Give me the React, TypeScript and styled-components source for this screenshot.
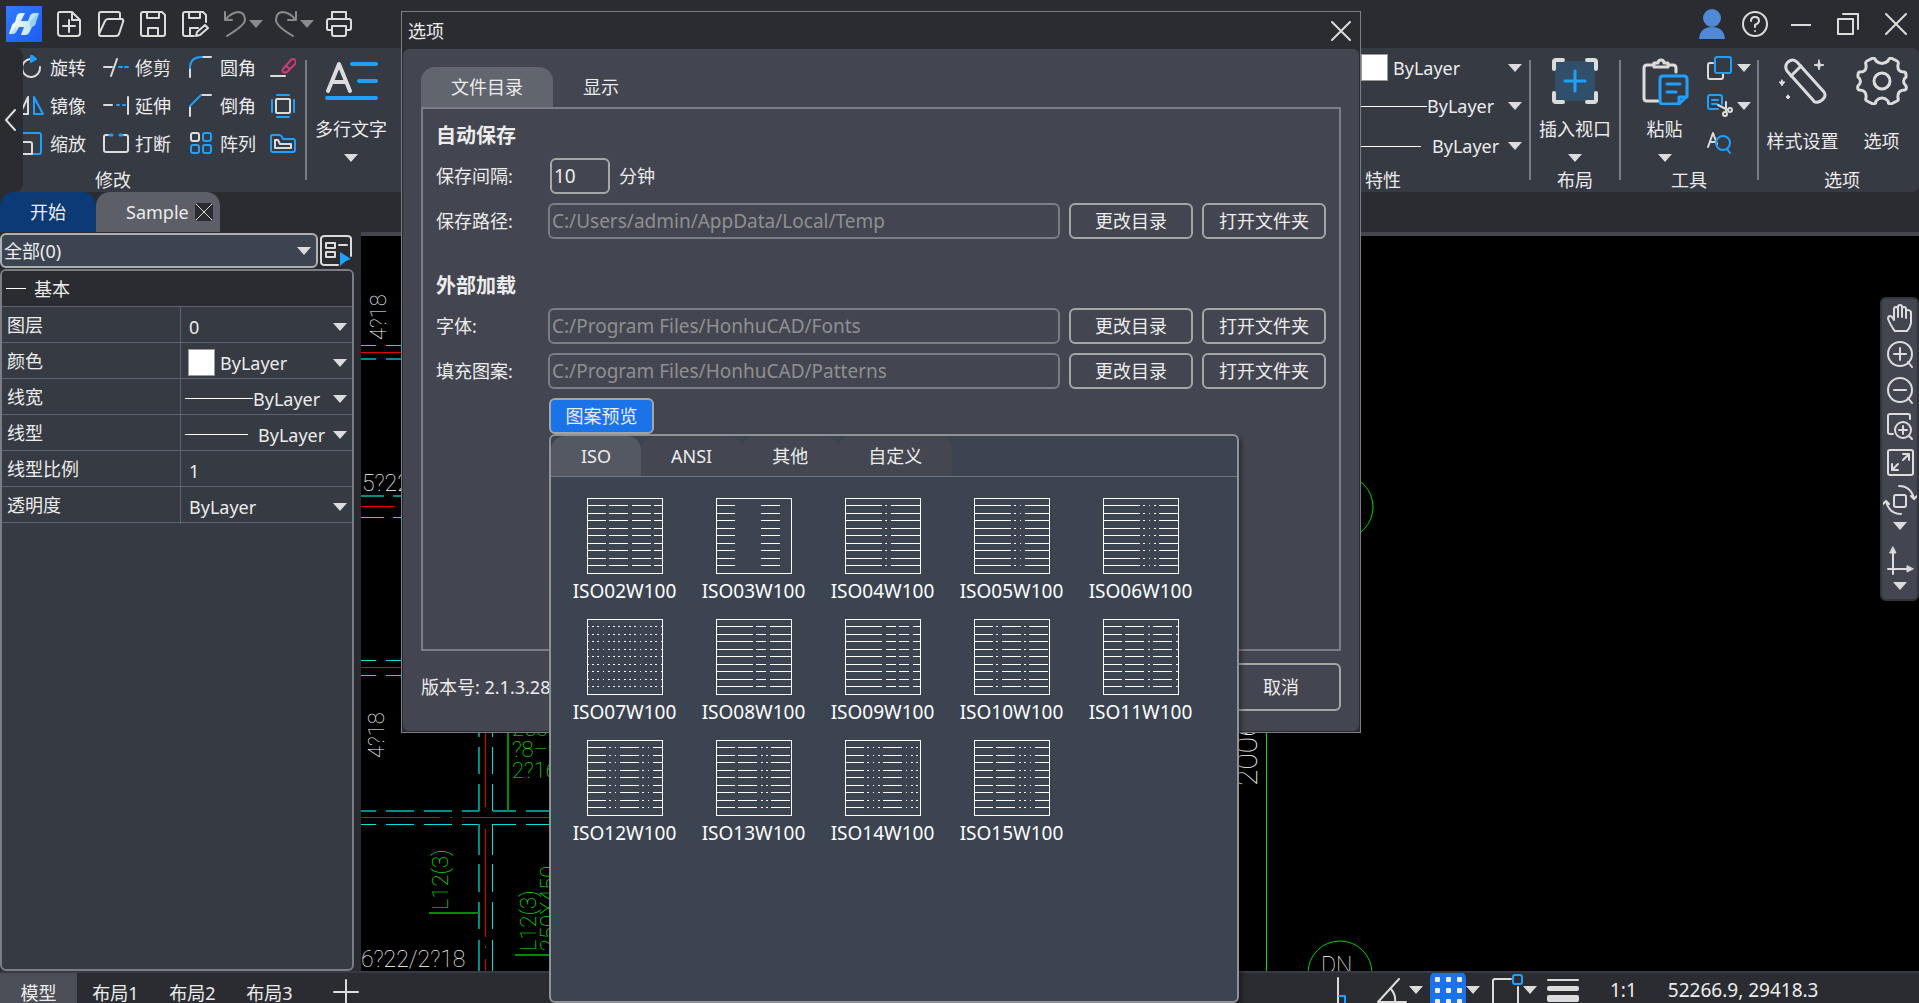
import React from "react";
import styled, { createGlobalStyle } from "styled-components";

const c = {
  chrome: "#2b2c31",
  ribbon: "#363a43",
  dialog: "#434650",
  field: "#3c4452",
  edge: "#7b7d84",
  edgeLight: "#a5a6a6",
  text: "#ececec",
  icon: "#dcdcdc",
  blue: "#1ea0ff",
  accent: "#1a73e8",
};

const Global = createGlobalStyle`
  * { box-sizing: border-box; }
  body {
    margin: 0;
    background: ${c.chrome};
    overflow: hidden;
  }
  body, button, input, select {
    font-family: "Noto Sans", "Noto Sans CJK SC", sans-serif;
    font-size: 18px;
    line-height: 24px;
    color: ${c.text};
  }
  button, input, select { margin: 0; padding: 0; border: 0; background: none; outline: none; }
  button { white-space: nowrap; }
  svg { display: block; flex: none; }
`;

/* ---------- shell ---------- */

const Shell = styled.div`
  position: relative;
  height: 100vh;
  display: flex;
  flex-direction: column;
  overflow: hidden;
  background: ${c.chrome};
`;

const TitleBar = styled.header`
  flex: none;
  height: 48px;
  display: flex;
  align-items: center;
  padding: 0 12px 0 6px;
`;

const QuickTools = styled.div`
  display: flex;
  align-items: center;
  gap: 14px;
  margin-left: 13px;
`;

const IconButton = styled.button`
  display: flex;
  align-items: center;
  justify-content: center;
  gap: 2px;
`;

const SplitButton = styled(IconButton)`
  margin-right: -3px;
`;

const WindowTools = styled.div`
  margin-left: auto;
  display: flex;
  align-items: center;
  gap: 16px;
`;

const WindowButtons = styled.div`
  display: flex;
  align-items: center;
  gap: 26px;
  margin-left: 6px;
`;

/* ---------- ribbon ---------- */

const Ribbon = styled.div`
  flex: none;
  height: 144px;
  display: flex;
  background: ${c.ribbon};
  border-radius: 0 6px 6px 0;
  overflow: hidden;
`;

const ScrollButton = styled.button`
  flex: none;
  width: 23px;
  z-index: 1;
  display: flex;
  align-items: center;
  justify-content: center;
  padding-right: 3px;
  background: ${c.chrome};
  border-radius: 0 8px 8px 0;
`;

const Group = styled.section<{ $w: number; $tuck?: number; $bleed?: number }>`
  flex: none;
  width: ${(p) => p.$w}px;
  margin-left: ${(p) => -(p.$tuck ?? 0)}px;
  margin-right: ${(p) => -(p.$bleed ?? 0)}px;
  display: flex;
  flex-direction: column;
`;

const GroupBody = styled.div<{ $end?: boolean; $pad?: number }>`
  flex: 1;
  display: flex;
  justify-content: ${(p) => (p.$end ? "flex-end" : "center")};
  padding-top: 1px;
  padding-left: ${(p) => p.$pad ?? 0}px;
`;

const GroupLabel = styled.div`
  height: 24px;
  text-align: center;
`;

const Divider = styled.div`
  flex: none;
  width: 2px;
  margin: 12px -1px;
  background: ${c.edge};
`;

const Spacer = styled.div`
  flex: 1;
`;

const ToolGrid = styled.div`
  display: grid;
  grid-template-columns: 85px 85px 82px 36px;
  grid-auto-rows: 38px;
`;

const Tool = styled.button`
  display: flex;
  align-items: center;
  gap: 6px;
`;

const BigTool = styled.button<{ $low?: boolean }>`
  display: flex;
  flex-direction: column;
  align-items: center;
  align-self: flex-start;
  padding-top: 8px;

  & > span { margin-top: ${(p) => (p.$low ? 24 : 12)}px; }
  & > span + svg { margin-top: 13px; }
`;

const PropColumn = styled.div`
  width: 170px;
  display: grid;
  grid-template-rows: 37px 40px 40px;
  padding-right: 8px;
`;

const SmallTools = styled.div`
  display: grid;
  grid-auto-rows: 38px;
  margin-left: 18px;
`;

const SmallTool = styled.button`
  display: flex;
  align-items: center;
  gap: 4px;
`;

const StyleTools = styled.div`
  display: flex;
  gap: 17px;
  padding-right: 10px;
`;

/* ---------- value pickers ---------- */

const Picker = styled.div`
  display: flex;
  align-items: center;
  min-width: 0;
`;

const PlainSelect = styled.select`
  flex: 1;
  min-width: 0;
  height: 28px;
  appearance: none;
`;

const Swatch = styled.span`
  flex: none;
  width: 27px;
  height: 27px;
  background: #fff;
  border: 1px solid #9a9a9a;
`;

const LineSample = styled.span<{ $w: number }>`
  flex: none;
  width: ${(p) => p.$w}px;
  height: 1px;
  background: #fff;
`;

/* ---------- document tabs ---------- */

const DocTabs = styled.nav`
  flex: none;
  height: 40px;
  display: flex;
`;

const DocTab = styled.div<{ $active?: boolean }>`
  display: flex;
  align-items: center;
  gap: 6px;
  width: ${(p) => (p.$active ? 96 : 124)}px;
  padding-left: 30px;
  border-radius: 14px 14px 0 0;
  background: ${(p) => (p.$active ? "#0c3a76" : "#5c5f67")};
`;

const DocClose = styled.button`
  width: 18px;
  height: 18px;
  border-radius: 3px;
  background: ${c.chrome};
`;

/* ---------- workspace ---------- */

const Workspace = styled.main`
  flex: 1;
  min-height: 0;
  display: flex;
`;

const Side = styled.aside`
  flex: none;
  width: 361px;
  padding: 1px 7px 0 0;
  display: flex;
  flex-direction: column;
`;

const FilterRow = styled.div`
  display: flex;
  gap: 2px;
`;

const FilterBox = styled(Picker)`
  width: 318px;
  height: 35px;
  padding: 0 5px 0 2px;
  background: ${c.field};
  border: 2px solid #b0b0b0;
  border-radius: 6px;
`;

const PropPanel = styled.div`
  flex: 1;
  margin-top: 1px;
  border: 2px solid ${c.edge};
  border-radius: 6px;
  background: ${c.ribbon};
  overflow: hidden;
`;

const PropHeader = styled.button`
  display: flex;
  align-items: center;
  gap: 8px;
  width: 100%;
  height: 36px;
  padding-left: 4px;
  background: ${c.chrome};
  border-bottom: 1px solid #5d6373;
`;

const PropRow = styled.div`
  display: grid;
  grid-template-columns: 179px 1fr;
  height: 36px;
  border-bottom: 1px solid #5d6373;

  & > label {
    padding-left: 5px;
    line-height: 37px;
    border-right: 1px solid #5d6373;
  }
`;

const PropValue = styled(Picker)<{ $start: number }>`
  padding: 2px 5px 0 ${(p) => p.$start}px;
`;

const PlainInput = styled.input`
  width: 100%;
  height: 28px;
`;

const Canvas = styled.div`
  position: relative;
  flex: 1;
  min-width: 0;
  border-top: 4px solid #44474f;
  background: #000;
  overflow: hidden;
`;

const Drawing = styled.svg`
  width: 100%;
  height: 100%;
`;

const CadText = styled.text<{ $size?: number }>`
  font-family: Roboto, "Open Sans", sans-serif;
  font-weight: 100;
  font-size: ${(p) => p.$size ?? 22}px;
`;

const ViewBar = styled.div`
  position: absolute;
  top: 61px;
  right: 0;
  width: 39px;
  height: 304px;
  padding: 5px 0;
  display: flex;
  flex-direction: column;
  align-items: center;
  gap: 8px;
  border: 2px solid #33353c;
  border-radius: 6px;
  background: ${c.dialog};
`;

const ViewTool = styled(IconButton)`
  flex-direction: column;
  gap: 6px;
`;

/* ---------- status bar ---------- */

const StatusBar = styled.footer`
  flex: none;
  height: 32px;
  overflow: hidden;
  border-top: 2px solid #363a43;
`;

const StatusInner = styled.div`
  height: 38px;
  display: flex;
  align-items: center;
`;

const LayoutTab = styled.button<{ $active?: boolean }>`
  width: 77px;
  height: 38px;
  padding-top: 1px;
  background: ${(p) => (p.$active ? "#4b4e56" : "transparent")};
`;

const AddLayout = styled(IconButton)`
  margin-left: 25px;
`;

const StatusTools = styled.div`
  margin-left: auto;
  display: flex;
  align-items: center;
  width: 583px;
  padding-bottom: 4px;
`;

const Toggle = styled.button<{ $after?: number; $tight?: boolean }>`
  display: flex;
  align-items: center;
  margin-right: ${(p) => p.$after ?? 0}px;
  gap: ${(p) => (p.$tight ? 0 : 2)}px;
`;

const GridChip = styled.span`
  width: 36px;
  height: 36px;
  border-radius: 6px;
  background: ${c.accent};
`;

const Readout = styled.span`
  margin-left: 31px;
  font-size: 19px;
`;

/* ---------- options dialog ---------- */

const Dialog = styled.div`
  position: absolute;
  top: 11px;
  left: 401px;
  width: 960px;
  border: 1px solid ${c.edge};
  background: ${c.chrome};
`;

const DialogTitle = styled.div`
  height: 37px;
  display: flex;
  align-items: center;
  justify-content: space-between;
  padding: 0 9px 0 6px;
`;

const DialogBody = styled.div`
  margin: 0 1px 1px;
  padding: 18px 18px 20px;
  border-radius: 6px;
  background: ${c.dialog};
`;

const DialogTabs = styled.div`
  display: flex;
  height: 40px;
`;

const DialogTab = styled.button<{ $active?: boolean }>`
  width: ${(p) => (p.$active ? 132 : 96)}px;
  border-radius: 14px 14px 0 0;
  background: ${(p) => (p.$active ? "#61656d" : "transparent")};
`;

const Pane = styled.div`
  height: 544px;
  padding: 12px 13px;
  border: 2px solid ${c.edge};
`;

const Heading = styled.h2<{ $mt?: number }>`
  margin: ${(p) => p.$mt ?? 0}px 0 0;
  font-size: 20px;
  line-height: 30px;
  font-weight: 700;
`;

const FormRow = styled.div<{ $mt: number }>`
  display: grid;
  grid-template-columns: 112px 1fr;
  align-items: center;
  min-height: 36px;
  margin-top: ${(p) => p.$mt}px;
`;

const Inline = styled.div<{ $indent?: number }>`
  display: flex;
  align-items: center;
  gap: 9px;
  padding-left: ${(p) => p.$indent ?? 0}px;
`;

const TextBox = styled.input<{ $w?: number }>`
  height: 36px;
  padding: 0 2px;
  font-size: 19px;
  ${(p) => (p.$w ? `width: ${p.$w}px;` : "flex: 1; min-width: 0;")}
  border: 2px solid ${c.edgeLight};
  border-radius: 6px;

  &:disabled {
    color: #8f9091;
    border-color: ${c.edge};
  }
`;

const Button = styled.button<{ $w: number; $tall?: boolean; $primary?: boolean }>`
  width: ${(p) => p.$w}px;
  height: ${(p) => (p.$tall ? 48 : 36)}px;
  border: 2px solid ${c.edgeLight};
  border-radius: 6px;
  background: ${(p) => (p.$primary ? c.accent : "transparent")};
`;

const DialogFooter = styled.div`
  display: flex;
  align-items: center;
  justify-content: space-between;
  margin-top: 12px;
`;

/* ---------- pattern popup ---------- */

const Anchor = styled.div`
  position: relative;
`;

const Popup = styled.div`
  position: absolute;
  top: 36px;
  left: 0;
  width: 690px;
  height: 569px;
  border: 2px solid #919295;
  border-radius: 6px;
  background: ${c.field};
  box-shadow: 3px 3px 4px rgba(0, 0, 0, 0.35);
  overflow: hidden;
`;

const PopupTabs = styled.div`
  display: flex;
  height: 41px;
  border-bottom: 1px solid #71757e;
`;

const PopupTab = styled.button<{ $active?: boolean }>`
  padding: 0 30px;
  border-radius: 14px 14px 0 0;
  background: ${(p) => (p.$active ? "#545863" : "#444751")};
`;

const PatternGrid = styled.div`
  display: grid;
  grid-template-columns: repeat(5, 129px);
  grid-auto-rows: 121px;
  padding: 21px 9px;
`;

const Pattern = styled.figure`
  margin: 0;
  display: flex;
  flex-direction: column;
  align-items: center;
  gap: 5px;
  font-size: 19px;
  color: #fff;
`;

/* ---------- icons ---------- */

type IconProps = { w: number; h: number; sw?: number; children: React.ReactNode };

const Icon = ({ w, h, sw = 2, children }: IconProps) => (
  <svg
    width={w}
    height={h}
    viewBox={`0 0 ${w} ${h}`}
    fill="none"
    stroke={c.icon}
    strokeWidth={sw}
    strokeLinecap="round"
    strokeLinejoin="round"
    aria-hidden="true"
  >
    {children}
  </svg>
);

const Caret = ({ dim }: { dim?: boolean }) => (
  <svg width="14" height="8" viewBox="0 0 14 8" aria-hidden="true">
    <path d="M0 0H14L7 8Z" fill={dim ? "#8a8b8e" : c.icon} />
  </svg>
);

const Cross = ({ size, sw = 2 }: { size: number; sw?: number }) => (
  <Icon w={size} h={size} sw={sw}>
    <path d={`M1 1L${size - 1} ${size - 1}M${size - 1} 1L1 ${size - 1}`} />
  </Icon>
);

const Logo = () => (
  <svg width="36" height="36" viewBox="0 0 36 36" aria-hidden="true">
    <defs>
      <linearGradient id="lg" x1="0" y1="0" x2="1" y2="1">
        <stop offset="0" stopColor="#2f7bff" />
        <stop offset="1" stopColor="#1f5cf0" />
      </linearGradient>
      <linearGradient id="lh" x1="0" y1="0" x2="1" y2="0">
        <stop offset="0" stopColor="#fff" />
        <stop offset="1" stopColor="#a9dcfb" />
      </linearGradient>
    </defs>
    <rect width="36" height="36" fill="url(#lg)" />
    <path d="M11 9Q12 7 15 7H19L15 15H22L24 10Q25 7 29 7H33L29 19Q28 20 26 21L23 27Q22 29 19 29H15L18 21H13L10 26Q9 28 6 28H3L6 19Q7 17 9 16Z" fill="url(#lh)" />
    <path d="M24 15L32 8L29 19L24 22Z" fill="#7cc6f7" opacity=".6" />
    <path d="M4 27L11 20L10 26Q9 28 6 28Z" fill="#8fd0fa" opacity=".6" />
  </svg>
);

const patterns: [string, number[][]][] = [
  ["ISO02W100", [[1, 19], [22, 41], [45, 64], [67, 75]]],
  ["ISO03W100", [[1, 19], [45, 64]]],
  ["ISO04W100", [[1, 37], [40, 42], [46, 75]]],
  ["ISO05W100", [[1, 37], [40, 42], [46, 47], [51, 75]]],
  ["ISO06W100", [[1, 37], [40, 42], [46, 47], [51, 53], [56, 75]]],
  ["ISO07W100", [[1, 2], [5, 7], [10, 12], [16, 17], [21, 23], [26, 28], [31, 33], [37, 39], [42, 44], [47, 49], [53, 54], [58, 60], [63, 65], [68, 70], [74, 75]]],
  ["ISO08W100", [[1, 37], [40, 50], [54, 75]]],
  ["ISO09W100", [[1, 37], [41, 51], [54, 64], [68, 75]]],
  ["ISO10W100", [[1, 19], [22, 24], [28, 47], [50, 52], [55, 74]]],
  ["ISO11W100", [[1, 19], [22, 41], [45, 47], [50, 69], [73, 75]]],
  ["ISO12W100", [[1, 19], [22, 24], [28, 29], [33, 52], [55, 57], [61, 62], [66, 75]]],
  ["ISO13W100", [[1, 19], [22, 41], [45, 47], [50, 52], [55, 74]]],
  ["ISO14W100", [[1, 19], [22, 24], [28, 29], [33, 35], [38, 57], [61, 62], [66, 68], [71, 73]]],
  ["ISO15W100", [[1, 19], [22, 41], [45, 47], [50, 52], [56, 57], [61, 75]]],
];

const hatchRows = [7, 15, 22, 30, 37, 45, 52, 60, 67];

const Hatch = ({ dashes }: { dashes: number[][] }) => (
  <svg width="76" height="76" viewBox="0 0 76 76" fill="none" stroke="#fff" shapeRendering="crispEdges" aria-hidden="true">
    <rect x="0.5" y="0.5" width="75" height="75" />
    <path d={hatchRows.map((y) => dashes.map(([a, b]) => `M${a} ${y + 0.5}H${b}`).join("")).join("")} />
  </svg>
);

/* ---------- ribbon tools ---------- */

const modifyTools: { label?: string; name: string; icon: React.ReactNode }[] = [
  {
    label: "旋转",
    name: "旋转",
    icon: (
      <>
        <path d="M22 12A9 9 0 1 1 12 4" />
        <path d="M13 0L18 4L13 7Z" fill={c.blue} stroke={c.blue} />
      </>
    ),
  },
  {
    label: "修剪",
    name: "修剪",
    icon: (
      <>
        <path d="M1 12H9M14 4L8 21" />
        <path d="M16 12H19M22 12H25" stroke={c.blue} />
      </>
    ),
  },
  {
    label: "圆角",
    name: "圆角",
    icon: (
      <>
        <path d="M2 22V13M14 2H23" />
        <path d="M2 13Q2 2 14 2" stroke={c.blue} />
      </>
    ),
  },
  {
    name: "删除",
    icon: (
      <g>
        <path d="M1 21H15" />
        <g stroke="#d23a74">
          <path d="M13 14L21 5Q23 3 25 5Q27 7 25 9L17 17Q15 18 13 17Q12 15 13 14Z" />
          <path d="M16 11L20 14" />
        </g>
      </g>
    ),
  },
  {
    label: "镜像",
    name: "镜像",
    icon: (
      <>
        <path d="M10 4V21H2Z" />
        <path d="M16 4V21H25Z" stroke={c.blue} />
      </>
    ),
  },
  {
    label: "延伸",
    name: "延伸",
    icon: (
      <>
        <path d="M1 12H9M25 4V21" />
        <path d="M14 12H16M20 12H22" stroke={c.blue} />
      </>
    ),
  },
  {
    label: "倒角",
    name: "倒角",
    icon: (
      <>
        <path d="M2 23V14M14 2H23" />
        <path d="M2 13L13 2" stroke={c.blue} />
      </>
    ),
  },
  {
    name: "分解",
    icon: (
      <>
        <rect x="6" y="6" width="14" height="14" rx="1" />
        <path d="M7 2H19M7 24H19M2 7V19M24 7V19" stroke={c.blue} />
      </>
    ),
  },
  {
    label: "缩放",
    name: "缩放",
    icon: (
      <>
        <path d="M2 2H21Q23 2 23 4V21Q23 23 21 23H2" stroke={c.blue} />
        <path d="M2 11H12Q14 11 14 13V23H2" />
      </>
    ),
  },
  {
    label: "打断",
    name: "打断",
    icon: (
      <>
        <path d="M5 4H3Q1 4 1 6V19Q1 21 3 21H23Q25 21 25 19V6Q25 4 23 4H21" />
        <path d="M7 4H9M17 4H19" stroke={c.blue} strokeWidth="3" />
      </>
    ),
  },
  {
    label: "阵列",
    name: "阵列",
    icon: (
      <>
        <rect x="3" y="2" width="8" height="8" rx="2" />
        <g stroke={c.blue}>
          <rect x="15" y="2" width="8" height="8" rx="2" />
          <rect x="3" y="14" width="8" height="8" rx="2" />
          <rect x="15" y="14" width="8" height="8" rx="2" />
        </g>
      </>
    ),
  },
  {
    name: "偏移",
    icon: (
      <>
        <path d="M2 4H9Q11 4 12 6L13 8H23Q25 8 25 10V19Q25 21 23 21H3Q1 21 1 19V5Q1 4 2 4Z" stroke={c.blue} />
        <path d="M5 9H8L10 13H21V17H5Z" />
      </>
    ),
  },
];

const LayerPicker = ({ name, start }: { name: string; start: React.ReactNode }) => (
  <Picker>
    {start}
    <PlainSelect aria-label={name} defaultValue="ByLayer">
      <option>ByLayer</option>
    </PlainSelect>
    <Caret />
  </Picker>
);

const Gap = styled.span<{ $w: number }>`
  flex: none;
  width: ${(p) => p.$w}px;
`;

const RibbonView = () => (
  <Ribbon>
    <ScrollButton aria-label="向左滚动">
      <Icon w={12} h={24}>
        <path d="M11 2L2 12L11 22" />
      </Icon>
    </ScrollButton>
    <Group $w={386} $tuck={103}>
      <GroupBody $end>
        <ToolGrid>
          {modifyTools.map((t) => (
            <Tool key={t.name} aria-label={t.name}>
              <Icon w={26} h={26}>{t.icon}</Icon>
              {t.label}
            </Tool>
          ))}
        </ToolGrid>
      </GroupBody>
      <GroupLabel>修改</GroupLabel>
    </Group>
    <Divider />
    <Group $w={90}>
      <GroupBody>
        <BigTool>
          <Icon w={54} h={48} sw={4}>
            <path d="M4 34L15 7L26 34M8 25H22" />
            <path d="M28 7H52M35 24H52M3 41H52" stroke={c.blue} />
          </Icon>
          <span>多行文字</span>
          <Caret />
        </BigTool>
      </GroupBody>
    </Group>
    <Spacer />
    <Group $w={294}>
      <GroupBody $end>
        <PropColumn>
          <LayerPicker name="颜色" start={<><Gap $w={1} /><Swatch /><Gap $w={5} /></>} />
          <LayerPicker name="线宽" start={<LineSample $w={67} />} />
          <LayerPicker name="线型" start={<><LineSample $w={61} /><Gap $w={11} /></>} />
        </PropColumn>
      </GroupBody>
      <GroupLabel>特性</GroupLabel>
    </Group>
    <Divider />
    <Group $w={90}>
      <GroupBody>
        <BigTool>
          <Icon w={48} h={48} sw={4}>
            <rect x="4" y="4" width="40" height="40" fill="#2f4f6b" stroke="none" />
            <path d="M3 12V5Q3 3 5 3H12M36 3H43Q45 3 45 5V12M45 36V43Q45 45 43 45H36M12 45H5Q3 45 3 43V36" />
            <path d="M24 14V34M14 24H34" stroke={c.blue} strokeWidth="3" />
          </Icon>
          <span>插入视口</span>
          <Caret />
        </BigTool>
      </GroupBody>
      <GroupLabel>布局</GroupLabel>
    </Group>
    <Divider />
    <Group $w={138}>
      <GroupBody $pad={13}>
        <BigTool>
          <Icon w={48} h={48} sw={3}>
            <path d="M12 8H6Q3 8 3 11V41Q3 44 6 44H17M28 8H32Q35 8 35 11V15" />
            <path d="M13 10V6H17Q17 3 20 3Q23 3 23 6H27V10Z" />
            <path d="M22 19H43Q46 19 46 22V39L38 47H22Q19 47 19 44V22Q19 19 22 19Z" stroke={c.blue} />
            <path d="M26 27H39M26 35H35M38 47V40H46" stroke={c.blue} />
          </Icon>
          <span>粘贴</span>
          <Caret />
        </BigTool>
        <SmallTools>
          <SmallTool aria-label="复制">
            <Icon w={26} h={26}>
              <path d="M6 8H3Q1 8 1 10V22Q1 24 3 24H14Q16 24 16 22V19" />
              <rect x="8" y="2" width="16" height="16" rx="2" stroke={c.blue} />
            </Icon>
            <Caret />
          </SmallTool>
          <SmallTool aria-label="剪切">
            <Icon w={26} h={26}>
              <path d="M15 11V4Q15 2 13 2H3Q1 2 1 4V14Q1 16 3 16H11M5 7H11M5 11H10" stroke={c.blue} />
              <path d="M11 12L21 17M19 9V18" />
              <circle cx="18" cy="21" r="2" />
              <circle cx="23" cy="17" r="2" />
            </Icon>
            <Caret />
          </SmallTool>
          <SmallTool aria-label="查找">
            <Icon w={26} h={26}>
              <path d="M1 16L6 2L10 13M3 11H8" />
              <circle cx="16" cy="12" r="7" stroke={c.blue} />
              <path d="M20 18L23 22" stroke={c.blue} />
            </Icon>
          </SmallTool>
        </SmallTools>
      </GroupBody>
      <GroupLabel>工具</GroupLabel>
    </Group>
    <Divider />
    <Group $w={168} $bleed={7}>
      <GroupBody>
        <StyleTools>
          <BigTool $low>
            <Icon w={50} h={48} sw={3}>
              <path d="M9 14Q6 9 10 5Q15 1 19 5L46 35Q48 38 46 41Q42 46 37 45Q36 45 35 43Z" />
              <path d="M13 19L23 9" />
              <path d="M41 3L42 7L46 8L42 9L41 13L40 9L36 8L40 7ZM4 23L5 25L7 25L5 27L4 29L3 27L1 25L3 25ZM10 38L11 39L12 40L11 41L10 42L9 41L8 40L9 39Z" fill={c.icon} strokeWidth="1" />
            </Icon>
            <span>样式设置</span>
          </BigTool>
          <BigTool $low>
            <Icon w={52} h={48} sw={3}>
              <path d="M17 1L11 4Q9 5 10 8Q11 15 4 15Q2 15 2 18V20Q7 24 2 29Q1 32 3 33Q11 33 10 41Q9 43 11 44L17 47Q20 47 20 44Q26 38 32 44Q32 47 35 47L41 44Q43 43 42 41Q41 33 49 33Q51 32 50 29Q45 24 50 20V18Q50 15 48 15Q41 15 42 8Q43 5 41 4L35 1Q33 1 32 4Q26 9 20 4Q19 1 17 1Z" />
              <circle cx="26" cy="24" r="8" />
            </Icon>
            <span>选项</span>
          </BigTool>
        </StyleTools>
      </GroupBody>
      <GroupLabel>选项</GroupLabel>
    </Group>
  </Ribbon>
);

/* ---------- title bar ---------- */

const TitleBarView = () => (
  <TitleBar>
    <Logo />
    <QuickTools>
      <IconButton aria-label="新建">
        <Icon w={28} h={28}>
          <path d="M5 2H17L25 10V23Q25 26 22 26H6Q3 26 3 23V4Q3 2 5 2ZM17 2V10H25M14 10V22M8 16H20" />
        </Icon>
      </IconButton>
      <IconButton aria-label="打开">
        <Icon w={28} h={28}>
          <path d="M2 24V4Q2 2 4 2H21Q23 2 23 4V9M2 24L8 11Q9 9 11 9H25Q27 10 26 12L22 24Q21 26 19 26H4Q2 26 2 24" />
        </Icon>
      </IconButton>
      <IconButton aria-label="保存">
        <Icon w={28} h={28}>
          <path d="M4 2H23L26 5V24Q26 26 24 26H4Q2 26 2 24V4Q2 2 4 2ZM8 2V8H20V2M9 26V18H19V26" />
        </Icon>
      </IconButton>
      <IconButton aria-label="另存为">
        <Icon w={28} h={28}>
          <path d="M13 26H4Q2 26 2 24V4Q2 2 4 2H22L25 5V12M8 2V8H19V2M9 26V18H17" />
          <path d="M15 26L16 22L24 15L27 18L19 25Z" />
        </Icon>
      </IconButton>
      <SplitButton aria-label="撤销">
        <Icon w={24} h={28}>
          <path d="M2 2V10H9M3 9Q9 2 16 2Q22 3 22 10Q22 15 4 26" stroke="#8a8b8e" />
        </Icon>
        <Caret dim />
      </SplitButton>
      <SplitButton aria-label="重做">
        <Icon w={24} h={28}>
          <path d="M22 2V10H14M21 9Q15 2 8 2Q2 3 2 10Q2 16 19 26" stroke="#8a8b8e" />
        </Icon>
        <Caret dim />
      </SplitButton>
      <IconButton aria-label="打印">
        <Icon w={28} h={28}>
          <path d="M7 9V2H21V9M7 20H3Q2 20 2 18V11Q2 9 4 9H24Q26 9 26 11V18Q26 20 24 20H21M7 16H21V24Q21 26 19 26H9Q7 26 7 24Z" />
        </Icon>
      </IconButton>
    </QuickTools>
    <WindowTools>
      <IconButton aria-label="账户">
        <svg width="26" height="30" viewBox="0 0 26 30" fill="#5189d6" aria-hidden="true">
          <circle cx="13" cy="9" r="9" />
          <path d="M0 30Q1 18 13 18Q25 18 26 30Z" />
        </svg>
      </IconButton>
      <IconButton aria-label="帮助">
        <Icon w={28} h={28}>
          <circle cx="14" cy="14" r="12" />
          <path d="M10 11Q10 7 14 7Q18 7 18 11Q18 13 14 15V17M14 21V21" />
        </Icon>
      </IconButton>
      <WindowButtons>
        <IconButton aria-label="最小化">
          <Icon w={20} h={22}>
            <path d="M0 12H20" />
          </Icon>
        </IconButton>
        <IconButton aria-label="还原">
          <Icon w={22} h={22}>
            <path d="M1 6H16V21H1ZM6 1H21V16" />
          </Icon>
        </IconButton>
        <IconButton aria-label="关闭">
          <Cross size={22} />
        </IconButton>
      </WindowButtons>
    </WindowTools>
  </TitleBar>
);

/* ---------- side panel ---------- */

const props: { id: string; label: string; start: number; value: string; before?: React.ReactNode; input?: boolean }[] = [
  { id: "layer", label: "图层", start: 8, value: "0" },
  { id: "color", label: "颜色", start: 7, value: "ByLayer", before: <><Swatch /><Gap $w={5} /></> },
  { id: "weight", label: "线宽", start: 4, value: "ByLayer", before: <LineSample $w={68} /> },
  { id: "type", label: "线型", start: 4, value: "ByLayer", before: <><LineSample $w={63} /><Gap $w={10} /></> },
  { id: "scale", label: "线型比例", start: 8, value: "1", input: true },
  { id: "opacity", label: "透明度", start: 8, value: "ByLayer" },
];

const SideView = () => (
  <Side>
    <FilterRow>
      <FilterBox>
        <PlainSelect aria-label="选择集" defaultValue="all">
          <option value="all">全部(0)</option>
        </PlainSelect>
        <Caret />
      </FilterBox>
      <IconButton aria-label="快速选择">
        <Icon w={32} h={34}>
          <path d="M18 31H5Q1 31 1 28V5Q1 2 5 2H27Q31 2 31 5V22M19 11H27" />
          <path d="M6 9H15V14H6ZM6 18H15V23H6Z" />
          <path d="M20 18L31 25L26 27L20 32Z" fill={c.blue} stroke="none" />
        </Icon>
      </IconButton>
    </FilterRow>
    <PropPanel>
      <PropHeader>
        <LineSample $w={20} />
        基本
      </PropHeader>
      {props.map((p) => (
        <PropRow key={p.id}>
          <label htmlFor={p.id}>{p.label}</label>
          <PropValue $start={p.start}>
            {p.before}
            {p.input ? (
              <PlainInput id={p.id} defaultValue={p.value} />
            ) : (
              <>
                <PlainSelect id={p.id} defaultValue={p.value}>
                  <option>{p.value}</option>
                </PlainSelect>
                <Caret />
              </>
            )}
          </PropValue>
        </PropRow>
      ))}
    </PropPanel>
  </Side>
);

/* ---------- drawing ---------- */

const DrawingView = () => (
  <Drawing fill="none">
    <g transform="translate(-361 -236)" shapeRendering="crispEdges">
      <g stroke="#00e0e0">
        <path d="M361 345.5H376M386 345.5H420M361 660.5H376M386 660.5H420M361 675.5H376M386 675.5H420M361 517.5H384M393 517.5H420M361 824.5H376M386 824.5H414M424 824.5H452M462 824.5H479M493 824.5H516M526 824.5H560M492.5 730V737M492.5 747V774M492.5 784V811M492.5 824V855M492.5 864V892M492.5 902V929M492.5 940V971" />
      </g>
      <g stroke="#008c8c" strokeWidth="2">
        <path d="M361 359H376M386 359H420M361 496H384M393 496H420M361 811H376M386 811H414M424 811H452M462 811H479M493 811H516M526 811H560M479 730V737M479 747V774M479 784V811M479 824V855M479 864V892M479 902V929M479 940V971" />
      </g>
      <g stroke="#e60000">
        <path d="M361 352.5H420M361 506.5H395M361 667.5H420M361 817.5H440M450 817.5H452M462 817.5H560M485.5 730V807M485.5 829V937M485.5 946V948M485.5 959V971" />
      </g>
      <g stroke="#008c00" strokeWidth="2">
        <path d="M508 730V811M429 913H479M515 955H560" />
      </g>
      <path d="M1266.5 730V975" stroke="#00e600" />
    </g>
    <g transform="translate(-361 -236)">
      <g stroke="#00d000">
        <circle cx="1341" cy="507" r="32" />
        <circle cx="1340" cy="973" r="32" />
      </g>
      <g fill="#fff">
        <CadText transform="translate(386 340) rotate(-90)">4?18</CadText>
        <CadText transform="translate(384 758) rotate(-90)">4?18</CadText>
        <CadText $size={23} x="362" y="491">5?22</CadText>
        <CadText $size={23} x="361" y="967">6?22/2?18</CadText>
        <CadText $size={30} transform="translate(1257 786) rotate(-90)">2006</CadText>
        <CadText $size={23} x="1321" y="973">DN</CadText>
      </g>
      <g fill="#00ff00">
        <CadText x="512" y="736">250</CadText>
        <CadText x="512" y="757">?8–</CadText>
        <CadText x="512" y="778">2?16</CadText>
        <CadText transform="translate(448 910) rotate(-90)">L12(3)</CadText>
        <CadText transform="translate(536 951) rotate(-90)">L12(3)</CadText>
        <CadText transform="translate(556 951) rotate(-90)">250X450</CadText>
      </g>
    </g>
  </Drawing>
);

const ViewBarView = () => (
  <ViewBar>
    <ViewTool aria-label="平移">
      <Icon w={28} h={28}>
        <path d="M8 26Q4 20 2 15Q2 12 4 12Q6 12 8 16V5Q8 3 10 3Q12 3 12 5V13V3Q12 1 14 1Q16 1 16 3V13V4Q16 3 18 3Q20 3 20 5V14V8Q20 6 22 6Q24 6 25 8V19Q24 24 21 27H9Z" />
      </Icon>
    </ViewTool>
    <ViewTool aria-label="放大">
      <Icon w={28} h={28}>
        <circle cx="14" cy="14" r="12" />
        <path d="M22 22L26 27M8 14H20M14 8V20" />
      </Icon>
    </ViewTool>
    <ViewTool aria-label="缩小">
      <Icon w={28} h={28}>
        <circle cx="14" cy="14" r="12" />
        <path d="M22 22L26 27M8 14H20" />
      </Icon>
    </ViewTool>
    <ViewTool aria-label="窗口缩放">
      <Icon w={28} h={28}>
        <path d="M24 7V4Q24 2 22 2H4Q2 2 2 4V20Q2 22 4 22H7" />
        <circle cx="17" cy="18" r="8" />
        <path d="M13 18H21M17 14V22M23 24L26 27" />
      </Icon>
    </ViewTool>
    <ViewTool aria-label="全部缩放">
      <Icon w={28} h={28}>
        <rect x="2" y="2" width="25" height="25" rx="2" />
        <path d="M17 12L22 7M17 6H23V12M12 16L7 21M6 16V22H12" />
      </Icon>
    </ViewTool>
    <ViewTool aria-label="动态观察">
      <Icon w={34} h={32}>
        <rect x="11" y="11" width="12" height="12" rx="2" />
        <path d="M16 2Q28 2 31 15M28 12L31 15L34 12M18 30Q6 30 3 17M0 20L3 17L6 20" />
      </Icon>
      <Caret />
    </ViewTool>
    <ViewTool aria-label="坐标系">
      <Icon w={28} h={38}>
        <path d="M7 12V36M2 31H24" />
        <path d="M7 9L10 15H4ZM27 31L21 34V28Z" fill={c.icon} strokeWidth="1" />
      </Icon>
      <Caret />
    </ViewTool>
  </ViewBar>
);

/* ---------- status bar ---------- */

const StatusView = () => (
  <StatusBar>
    <StatusInner>
      <LayoutTab $active>模型</LayoutTab>
      <LayoutTab>布局1</LayoutTab>
      <LayoutTab>布局2</LayoutTab>
      <LayoutTab>布局3</LayoutTab>
      <AddLayout aria-label="新建布局">
        <Icon w={26} h={26}>
          <path d="M13 1V25M1 13H25" />
        </Icon>
      </AddLayout>
      <StatusTools>
        <Toggle $after={13} aria-label="正交">
          <Icon w={28} h={32}>
            <path d="M2 4V30H27" />
            <path d="M3 22H9V29" stroke={c.blue} />
          </Icon>
        </Toggle>
        <Toggle $after={7} aria-label="极轴追踪">
          <Icon w={30} h={32}>
            <path d="M22 5L1 28H29M14 15Q19 21 18 28" />
          </Icon>
          <Caret />
        </Toggle>
        <Toggle $after={11} $tight aria-label="栅格">
          <GridChip>
            <svg width="36" height="36" viewBox="0 0 36 36" fill="#ececec" aria-hidden="true">
              {[7, 18, 29].map((y) => [7, 18, 29].map((x) => <rect key={`${x}-${y}`} x={x - 2} y={y - 2} width="5" height="5" rx="1" />))}
            </svg>
          </GridChip>
          <Caret />
        </Toggle>
        <Toggle $after={10} $tight aria-label="对象捕捉">
          <Icon w={32} h={36}>
            <path d="M2 36V9Q2 7 4 7H20M27 15V36" />
            <rect x="22" y="3" width="9" height="9" rx="2" stroke={c.blue} />
          </Icon>
          <Caret />
        </Toggle>
        <Toggle aria-label="线宽显示">
          <svg width="32" height="32" viewBox="0 0 32 32" fill={c.icon} aria-hidden="true">
            <rect y="5" width="32" height="2" rx="1" />
            <rect y="12" width="32" height="5" rx="2" />
            <rect y="21" width="32" height="7" rx="2" />
          </svg>
        </Toggle>
        <Readout>1:1</Readout>
        <Readout>52266.9, 29418.3</Readout>
      </StatusTools>
    </StatusInner>
  </StatusBar>
);

/* ---------- dialog ---------- */

const PathRow = ({ id, label, path, mt }: { id: string; label: string; path: string; mt: number }) => (
  <FormRow $mt={mt}>
    <label htmlFor={id}>{label}</label>
    <Inline>
      <TextBox id={id} defaultValue={path} disabled />
      <Button $w={124}>更改目录</Button>
      <Button $w={124}>打开文件夹</Button>
    </Inline>
  </FormRow>
);

const OptionsDialog = () => (
  <Dialog role="dialog" aria-label="选项">
    <DialogTitle>
      选项
      <IconButton aria-label="关闭选项">
        <Cross size={20} />
      </IconButton>
    </DialogTitle>
    <DialogBody>
      <DialogTabs role="tablist">
        <DialogTab role="tab" $active>文件目录</DialogTab>
        <DialogTab role="tab">显示</DialogTab>
      </DialogTabs>
      <Pane>
        <Heading>自动保存</Heading>
        <FormRow $mt={7}>
          <label htmlFor="interval">保存间隔:</label>
          <Inline $indent={2}>
            <TextBox id="interval" defaultValue="10" $w={60} />
            <span>分钟</span>
          </Inline>
        </FormRow>
        <PathRow id="savePath" label="保存路径:" path="C:/Users/admin/AppData/Local/Temp" mt={9} />
        <Heading $mt={32}>外部加载</Heading>
        <PathRow id="fontPath" label="字体:" path="C:/Program Files/HonhuCAD/Fonts" mt={7} />
        <PathRow id="patternPath" label="填充图案:" path="C:/Program Files/HonhuCAD/Patterns" mt={9} />
        <FormRow $mt={9}>
          <span />
          <Inline $indent={1}>
            <Anchor>
              <Button $w={105} $primary>图案预览</Button>
              <Popup>
                <PopupTabs role="tablist">
                  <PopupTab role="tab" $active>ISO</PopupTab>
                  <PopupTab role="tab">ANSI</PopupTab>
                  <PopupTab role="tab">其他</PopupTab>
                  <PopupTab role="tab">自定义</PopupTab>
                </PopupTabs>
                <PatternGrid>
                  {patterns.map(([name, dashes]) => (
                    <Pattern key={name}>
                      <Hatch dashes={dashes} />
                      <figcaption>{name}</figcaption>
                    </Pattern>
                  ))}
                </PatternGrid>
              </Popup>
            </Anchor>
          </Inline>
        </FormRow>
      </Pane>
      <DialogFooter>
        <span>版本号: 2.1.3.28</span>
        <Button $w={120} $tall>取消</Button>
      </DialogFooter>
    </DialogBody>
  </Dialog>
);

export default function App() {
  return (
    <>
      <Global />
      <Shell>
        <TitleBarView />
        <RibbonView />
        <DocTabs>
          <DocTab $active>开始</DocTab>
          <DocTab>
            Sample
            <DocClose aria-label="关闭 Sample">
              <Cross size={18} sw={1} />
            </DocClose>
          </DocTab>
        </DocTabs>
        <Workspace>
          <SideView />
          <Canvas>
            <DrawingView />
            <ViewBarView />
          </Canvas>
        </Workspace>
        <StatusView />
        <OptionsDialog />
      </Shell>
    </>
  );
}
